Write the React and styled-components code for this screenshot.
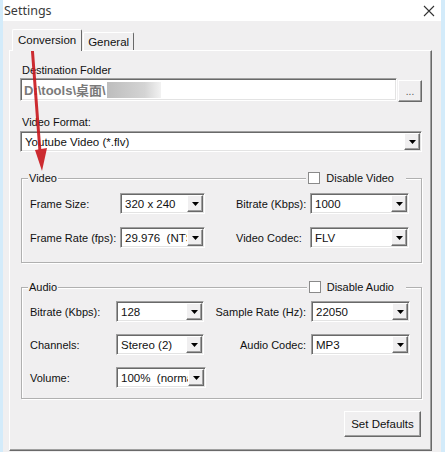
import React from "react";
import styled, { createGlobalStyle } from "styled-components";

const GlobalStyle = createGlobalStyle`
  html, body {
    margin: 0;
    padding: 0;
    background: #f0eff0;
  }
  body {
    font-family: "Liberation Sans", Arial, sans-serif;
    font-size: 11px;
    color: #000;
  }
`;

const Combo = ({ value, width }) => (
  <ComboBox $width={width}>
    <ComboText>{value}</ComboText>
    <DropButton>
      <svg width="7" height="4" viewBox="0 0 7 4">
        <path d="M0 0h7L3.5 4z" fill="#000" />
      </svg>
    </DropButton>
  </ComboBox>
);

const App = () => {
  return (
    <>
      <GlobalStyle />
      <Window>
        <TitleBar>
          <Title>Settings</Title>
          <svg width="12" height="12" viewBox="0 0 12 12">
            <path d="M1 1l10 10M11 1L1 11" stroke="#333" strokeWidth="1.1" />
          </svg>
        </TitleBar>

        <Body>
          <Tabs>
            <Tab $active>Conversion</Tab>
            <Tab>General</Tab>
          </Tabs>

          <Panel>
            <FieldLabel>Destination Folder</FieldLabel>
            <InputRow>
              <TextBox>
                D:\tools\桌面\
                <Redacted />
              </TextBox>
              <BrowseButton>...</BrowseButton>
            </InputRow>

            <FieldLabel $top={13}>Video Format:</FieldLabel>
            <WideCombo>
              <Combo value="Youtube Video (*.flv)" />
            </WideCombo>

            <GroupBox $top={26} $pt={14} $pb={14}>
              <Legend>Video</Legend>
              <CheckLegend>
                <CheckBox />
                Disable Video
              </CheckLegend>
              <Grid $cols="90px 85px 105px 99px" $gap={13}>
                <RowLabel>Frame Size:</RowLabel>
                <Combo value="320 x 240" />
                <RowLabel $pl={31}>Bitrate (Kbps):</RowLabel>
                <Combo value="1000" />
                <RowLabel>Frame Rate (fps):</RowLabel>
                <Combo value="29.976  (NTSC)" />
                <RowLabel $pl={31}>Video Codec:</RowLabel>
                <Combo value="FLV" />
              </Grid>
            </GroupBox>

            <GroupBox $top={24} $pt={13} $pb={10}>
              <Legend>Audio</Legend>
              <CheckLegend>
                <CheckBox />
                Disable Audio
              </CheckLegend>
              <Grid $cols="86px 88px 107px 99px" $gap={12}>
                <RowLabel>Bitrate (Kbps):</RowLabel>
                <Combo value="128" />
                <RowLabel $right>Sample Rate (Hz):</RowLabel>
                <Combo value="22050" />
                <RowLabel>Channels:</RowLabel>
                <Combo value="Stereo (2)" />
                <RowLabel $right>Audio Codec:</RowLabel>
                <Combo value="MP3" />
                <RowLabel>Volume:</RowLabel>
                <Combo value="100%  (normal)" width={90} />
              </Grid>
            </GroupBox>

            <DefaultsButton>Set Defaults</DefaultsButton>
          </Panel>
        </Body>

        <ArrowOverlay width="80" height="180" viewBox="0 0 80 180">
          <path
            d="M32 45L40 152"
            stroke="#c9161c"
            strokeWidth="3"
            strokeLinecap="round"
          />
          <path d="M35 150L47 148L42 171z" fill="#c9161c" />
        </ArrowOverlay>
      </Window>
    </>
  );
};

export default App;

const Window = styled.div`
  position: relative;
  width: 445px;
  height: 452px;
  box-sizing: border-box;
  border-left: 3px solid #d3ebfa;
  border-right: 4px solid #d3ebfa;
  background: #f0eff0;
  display: flex;
  flex-direction: column;
  overflow: hidden;
`;

const TitleBar = styled.div`
  height: 21px;
  flex-shrink: 0;
  background: #fff;
  display: flex;
  align-items: center;
  justify-content: space-between;
  padding: 0 6px 0 1px;
`;

const Title = styled.span`
  font-family: "Noto Sans", "Open Sans", sans-serif;
  font-size: 12.5px;
  color: #3a3a3a;
`;

const Body = styled.div`
  flex: 1;
  display: flex;
  flex-direction: column;
  padding: 8px 9px 1px 6px;
  min-height: 0;
`;

const Tabs = styled.div`
  height: 21px;
  display: flex;
  align-items: flex-end;
  padding-left: 3px;
  position: relative;
  z-index: 1;
`;

const Tab = styled.div`
  box-sizing: border-box;
  height: ${(p) => (p.$active ? "22px" : "18px")};
  margin-bottom: ${(p) => (p.$active ? "-1px" : "0")};
  padding: 0 ${(p) => (p.$active ? "5px" : "4px")};
  margin-left: ${(p) => (p.$active ? "0" : "1px")};
  line-height: ${(p) => (p.$active ? "20px" : "19px")};
  background: #f0eff0;
  border: 1px solid;
  border-color: #fff #696969 transparent #fff;
  border-bottom: none;
  border-radius: 2px 2px 0 0;
  font-size: 11.5px;
  color: #111;
`;

const Panel = styled.div`
  flex: 1;
  box-sizing: border-box;
  display: flex;
  flex-direction: column;
  border: 1px solid;
  border-color: #fff #696969 #696969 #fff;
  box-shadow: inset -1px -1px 0 #a0a0a0;
  padding: 12px 8px 0 10px;
`;

const FieldLabel = styled.div`
  line-height: 14px;
  padding-left: 2px;
  margin-top: ${(p) => p.$top || 0}px;
  margin-bottom: 1px;
  color: #111;
`;

const InputRow = styled.div`
  display: flex;
  gap: 1px;
`;

const TextBox = styled.div`
  box-sizing: border-box;
  width: 377px;
  height: 23px;
  background: #fff;
  border: 1px solid;
  border-color: #a0a0a0 #fff #fff #a0a0a0;
  box-shadow: inset 1px 1px 0 #696969, inset -1px -1px 0 #e3e3e3;
  display: flex;
  align-items: center;
  padding-left: 3px;
  font-family: "Liberation Sans", "Noto Sans CJK SC", sans-serif;
  font-size: 13px;
  font-weight: bold;
  color: #7a7a7a;
  white-space: pre;
`;

const Redacted = styled.span`
  display: inline-block;
  width: 54px;
  height: 16px;
  margin-left: 1px;
  background: linear-gradient(90deg, #bdbdbd, #d4d4d4 70%, #f2f2f2);
`;

const RaisedButton = styled.div`
  box-sizing: border-box;
  background: #f0eff0;
  border: 1px solid;
  border-color: #fff #696969 #696969 #fff;
  box-shadow: inset -1px -1px 0 #a0a0a0;
  display: flex;
  align-items: center;
  justify-content: center;
  font-size: 11.5px;
  color: #111;
`;

const BrowseButton = styled(RaisedButton)`
  width: 24px;
  height: 22px;
  margin-top: 2px;
  color: #555;
  font-size: 10px;
`;

const WideCombo = styled.div`
  margin-right: 1px;
  margin-top: 1px;
`;

const ComboBox = styled.div`
  box-sizing: border-box;
  width: ${(p) => (p.$width ? `${p.$width}px` : "100%")};
  height: 21px;
  background: #fff;
  border: 1px solid;
  border-color: #a0a0a0 #fff #fff #a0a0a0;
  box-shadow: inset 1px 1px 0 #696969, inset -1px -1px 0 #e3e3e3;
  display: flex;
  align-items: center;
  padding: 1px 1px 1px 2px;
`;

const ComboText = styled.div`
  flex: 1;
  min-width: 0;
  overflow: hidden;
  white-space: pre;
  padding-left: 2px;
  font-size: 11.5px;
  color: #111;
`;

const DropButton = styled(RaisedButton)`
  width: 16px;
  height: 17px;
  flex-shrink: 0;
`;

const GroupBox = styled.div`
  position: relative;
  margin: ${(p) => p.$top}px 1px 0 1px;
  padding: ${(p) => p.$pt}px 0 ${(p) => p.$pb}px 8px;
  border: 1px solid #b0b0b0;
  box-shadow: inset 1px 1px 0 #fff, 1px 1px 0 #fff;
`;

const Legend = styled.div`
  position: absolute;
  top: -8px;
  left: 6px;
  padding: 0 1px;
  line-height: 14px;
  background: #f0eff0;
  color: #111;
`;

const CheckLegend = styled.div`
  position: absolute;
  top: -9px;
  right: 15px;
  display: flex;
  align-items: center;
  gap: 6px;
  padding: 0 12px 0 2px;
  line-height: 16px;
  background: #f0eff0;
  color: #111;
`;

const CheckBox = styled.span`
  box-sizing: border-box;
  width: 12px;
  height: 12px;
  background: #fff;
  border: 1px solid #8a8a8a;
`;

const Grid = styled.div`
  display: grid;
  grid-template-columns: ${(p) => p.$cols};
  row-gap: ${(p) => p.$gap}px;
  grid-auto-rows: 21px;
  align-items: center;
`;

const RowLabel = styled.div`
  padding-left: ${(p) => p.$pl || 0}px;
  padding-right: ${(p) => (p.$right ? "5px" : "0")};
  text-align: ${(p) => (p.$right ? "right" : "left")};
  white-space: nowrap;
  color: #111;
`;

const DefaultsButton = styled(RaisedButton)`
  align-self: flex-end;
  width: 77px;
  height: 26px;
  margin: 12px 2px 0 0;
`;

const ArrowOverlay = styled.svg`
  position: absolute;
  left: -3px;
  top: 0;
  pointer-events: none;
  opacity: 0.9;
`;
